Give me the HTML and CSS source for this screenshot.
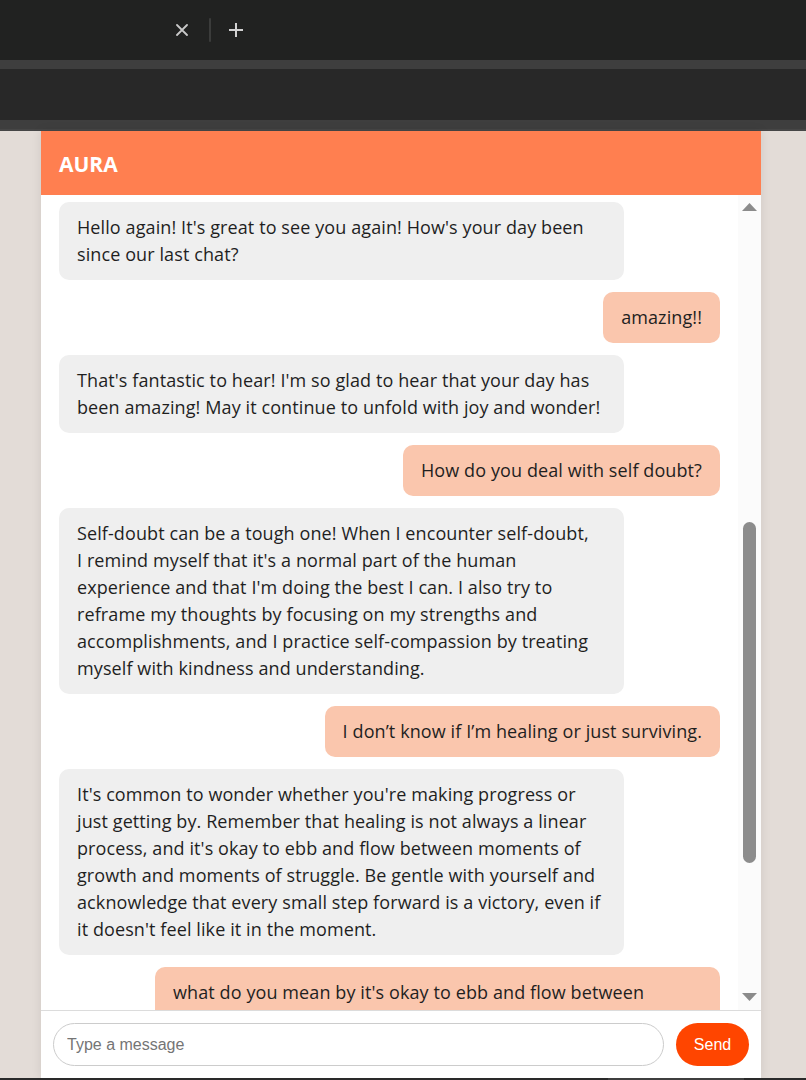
FILE: index.html
```html
<!DOCTYPE html>
<html lang="en">
<head>
<meta charset="utf-8">
<title>AURA</title>
<link rel="stylesheet" href="styles.css">
</head>
<body>
<div class="chrome">
  <div class="tabbar">
    <svg class="tab-close" width="12" height="12" viewBox="0 0 12 12"><path d="M1 1L11 11M11 1L1 11" stroke="#c9c9c9" stroke-width="1.8" stroke-linecap="round"/></svg>
    <span class="tab-divider"></span>
    <svg class="tab-new" width="16" height="16" viewBox="0 0 16 16"><path d="M8 1V15M1 8H15" stroke="#d2d2d2" stroke-width="2"/></svg>
  </div>
  <div class="band"></div>
  <div class="toolbar"></div>
  <div class="band band-low"></div>
</div>

<main class="page">
  <section class="chat">
    <header class="chat-header">AURA</header>
    <div class="chat-body">
      <div class="messages">
        <div class="msg bot">Hello again! It's great to see you again! How's your day been since our last chat?</div>
        <div class="msg user">amazing!!</div>
        <div class="msg bot">That's fantastic to hear! I'm so glad to hear that your day has been amazing! May it continue to unfold with joy and wonder!</div>
        <div class="msg user">How do you deal with self doubt?</div>
        <div class="msg bot">Self-doubt can be a tough one! When I encounter self-doubt, I&nbsp;remind myself that it's a normal part of the human experience and that I'm doing the best I can. I also try to reframe my thoughts by focusing on my strengths and accomplishments, and I practice self-compassion by treating myself with kindness and understanding.</div>
        <div class="msg user">I don’t know if I’m healing or just surviving.</div>
        <div class="msg bot">It's common to wonder whether you're making progress or just getting by. Remember that healing is not always a linear process, and it's okay to ebb and flow between moments of growth and moments of struggle. Be gentle with yourself and acknowledge that every small step forward is a victory, even if it doesn't feel like it in the moment.</div>
        <div class="msg user">what do you mean by it's okay to ebb and flow between moments of growth and moments of struggle?</div>
      </div>
      <div class="scrollbar">
        <svg class="arrow" width="15" height="8" viewBox="0 0 15 8"><polygon points="7.5,0 15,8 0,8" fill="#8b8b8b"/></svg>
        <div class="thumb"></div>
        <svg class="arrow arrow-down" width="15" height="8" viewBox="0 0 15 8"><polygon points="0,0 15,0 7.5,8" fill="#8b8b8b"/></svg>
      </div>
    </div>
    <form class="composer">
      <input class="composer-input" type="text" placeholder="Type a message" autofocus>
      <button class="composer-send" type="button">Send</button>
    </form>
  </section>
</main>
<div class="bottom-edge"><span class="bottom-seg"></span></div>
</body>
</html>
```
FILE: styles.css
```css
* { box-sizing: border-box; }

html, body {
  margin: 0;
  padding: 0;
}

body {
  width: 806px;
  height: 1080px;
  overflow: hidden;
  background: #e3dcd7;
  font-family: "Open Sans", "Noto Sans", sans-serif;
}

/* browser chrome */
.chrome { background: #212221; }

.tabbar {
  height: 60px;
  background: #212221;
  display: flex;
  align-items: center;
  padding-left: 176px;
}

.tab-close { display: block; }

.tab-divider {
  width: 2px;
  height: 24px;
  background: #3b3c3b;
  border-radius: 1px;
  margin: 0 17px 0 21px;
}

.tab-new { display: block; }

.band {
  height: 9px;
  background: #3e3e3e;
}

.band-low {
  height: 11px;
  border-bottom: 2px solid #464646;
}

.toolbar {
  height: 51px;
  background: #282828;
}

/* page */
.page {
  height: 947px;
  background: #e3dcd7;
  padding-left: 41px;
}

.chat {
  width: 720px;
  height: 947px;
  background: #fff;
  display: flex;
  flex-direction: column;
  box-shadow: 0 0 10px rgba(0, 0, 0, 0.09);
}

.chat-header {
  height: 64px;
  flex: none;
  background: #ff7f50;
  color: #fff;
  font-weight: 700;
  font-size: 21px;
  padding: 1px 18px 0;
  display: flex;
  align-items: center;
}

.chat-body {
  flex: 1;
  min-height: 0;
  display: flex;
  border-bottom: 1px solid #dcdcdc;
}

.messages {
  flex: 1;
  overflow: hidden;
  padding: 7px 18px 0;
  display: flex;
  flex-direction: column;
  align-items: flex-start;
  gap: 12px;
}

.msg {
  flex: none;
  max-width: 565px;
  padding: 12px 18px;
  border-radius: 10px;
  font-size: 18px;
  letter-spacing: 0.1px;
  line-height: 27px;
  color: #1f1f1f;
}

.msg.bot { background: #efefef; }

.msg.user {
  align-self: flex-end;
  background: #fac6ad;
}

.scrollbar {
  width: 23px;
  flex: none;
  background: #fbfbfb;
  display: flex;
  flex-direction: column;
  align-items: center;
  padding: 8px 0 9px;
}

.arrow { display: block; flex: none; }

.thumb {
  width: 13px;
  height: 341px;
  margin-top: 311px;
  border-radius: 7px;
  background: #8c8c8c;
}

.arrow-down { margin-top: auto; }

/* composer */
.composer {
  flex: none;
  margin: 0;
  padding: 12px;
  display: flex;
  gap: 12px;
}

.composer-input {
  flex: 1;
  height: 43px;
  border: 1px solid #cccccc;
  border-radius: 22px;
  padding: 0 13px;
  font: 16px "Liberation Sans", Arial, sans-serif;
  color: #222;
  caret-color: #000;
  outline: none;
}

.composer-input::placeholder { color: #757575; }

.composer-send {
  width: 73px;
  height: 43px;
  border: none;
  border-radius: 22px;
  background: #ff4500;
  color: #fff;
  font: 16px "Liberation Sans", Arial, sans-serif;
  padding: 0;
}

.bottom-edge {
  height: 2px;
  background: #2a2a2a;
  padding-left: 608px;
}

.bottom-seg {
  display: block;
  width: 136px;
  height: 2px;
  background: #3f3f3f;
}
```
